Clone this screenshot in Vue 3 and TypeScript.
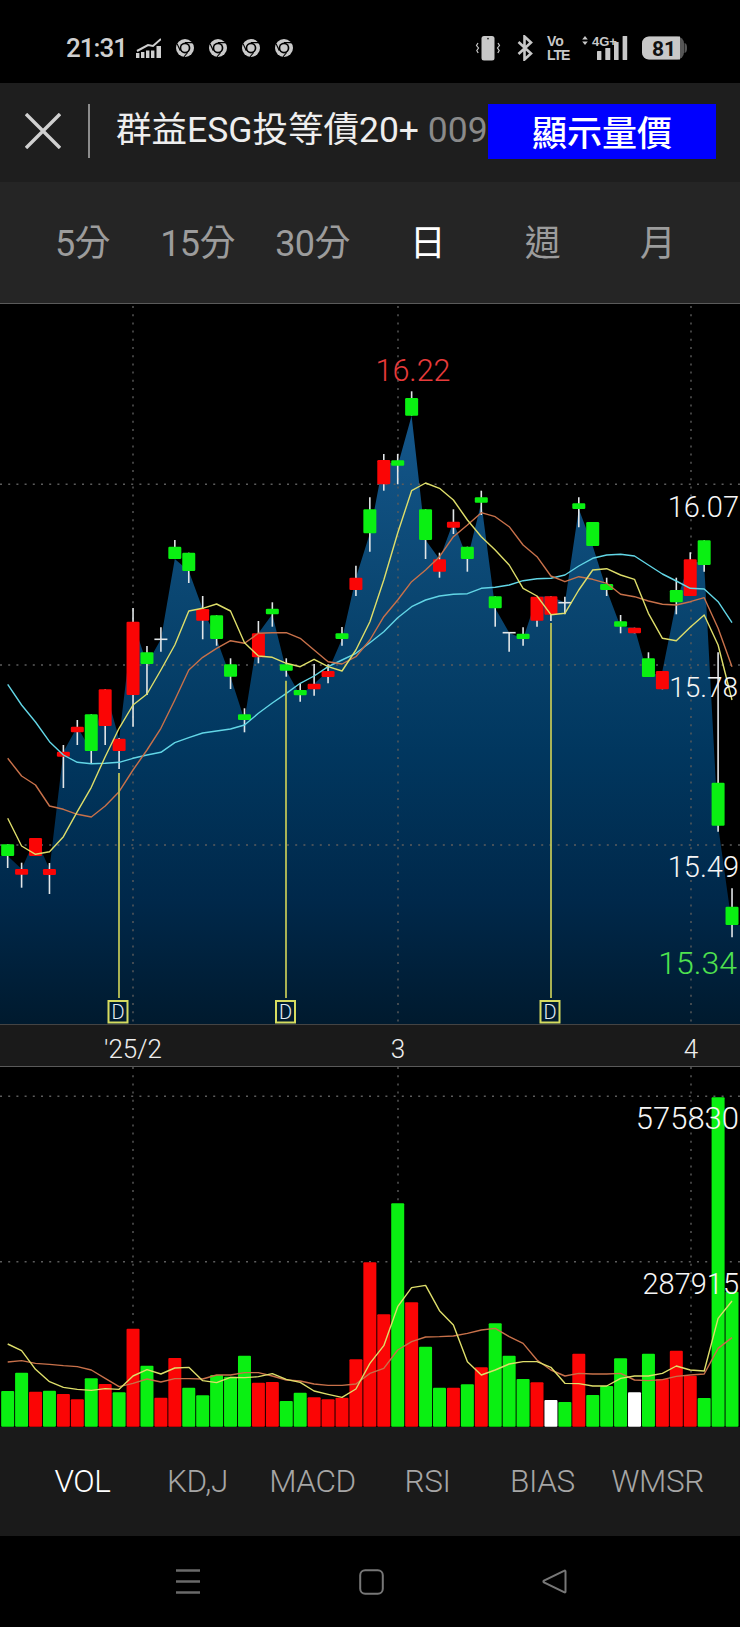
<script setup lang="ts">
import { computed } from 'vue'

type Kind = 'g' | 'r' | 'd'
type Candle = [number, number, number, number, Kind]

const X = (i: number): number => 7.67 + 13.93 * i

const candles: Candle[] = [
  [844.3, 868, 844.3, 856, 'g'], [862.7, 887.7, 869, 874.7, 'r'], [838, 856, 838, 856, 'r'], [863, 894, 869, 875, 'r'],
  [745, 788, 751.7, 756.7, 'r'], [720, 745, 726.7, 732.3, 'r'], [714.3, 764, 714.3, 751, 'g'], [689.3, 745, 689.3, 726, 'r'],
  [738, 769, 738.7, 751, 'r'], [608, 726.7, 621.7, 695, 'r'], [646, 695, 652.3, 664, 'g'], [627.3, 651.7, 639.3, 639.3, 'd'],
  [540, 559, 546.7, 559, 'g'], [552.7, 583, 552.7, 571, 'g'], [596, 639.3, 609, 620.7, 'r'], [615.3, 645.7, 615.3, 639, 'g'],
  [658.3, 689, 664.3, 676.7, 'g'], [708.3, 732.3, 714.3, 720, 'g'], [621, 663.3, 633.3, 657.3, 'r'], [602.3, 626.7, 608.7, 614.3, 'g'],
  [658.3, 676.7, 664.3, 670.7, 'g'], [683.3, 701.7, 690, 695.3, 'g'], [664, 695.7, 683.7, 689.3, 'r'], [664.3, 683.3, 671, 677, 'r'],
  [627, 645.7, 633.3, 639, 'g'], [565.7, 596, 577.7, 590, 'r'], [497.3, 551.7, 509.3, 533.3, 'g'], [454, 490.7, 460, 484.3, 'r'],
  [454, 484.3, 460.3, 465.7, 'g'], [391.3, 415.7, 398, 415.7, 'g'], [509.3, 559, 509.3, 540, 'g'], [552.7, 577.7, 559.3, 571.7, 'r'],
  [509.3, 534, 521.7, 527.7, 'r'], [546.7, 571.7, 546.7, 559, 'g'], [490.7, 515, 497.3, 502.7, 'g'], [596.3, 626.7, 596.3, 608.3, 'g'],
  [632.7, 651.7, 632.7, 632.7, 'd'], [627.3, 645.7, 633.7, 639, 'g'], [596.7, 626.7, 596.7, 620.7, 'r'], [596.3, 621, 596.3, 614.7, 'r'],
  [596.7, 614.3, 602.7, 602.7, 'd'], [497.3, 527.3, 503.3, 509, 'g'], [522, 546, 522, 546, 'g'], [577.7, 596, 584, 590, 'g'],
  [615, 633.3, 621.3, 626.7, 'g'], [627.7, 633.3, 627.7, 633.3, 'r'], [652.3, 677, 658.3, 677, 'g'], [671, 689.3, 671, 689.3, 'r'],
  [577.7, 614.3, 590, 602.3, 'g'], [552.3, 596, 559.3, 596, 'r'], [540.3, 571.7, 540.3, 565, 'g'], [652.3, 831.7, 782.7, 825.7, 'g'],
  [888.3, 937.3, 906.7, 925, 'g'],
]

const line = (ys: number[]): string => ys.map((y, i) => `${X(i).toFixed(1)},${y}`).join(' ')

const ma5 = [818.3, 846, 854.3, 851.7, 836.7, 811.7, 787.3, 756.7, 728.3, 705, 694, 670, 645, 611, 608.3, 604, 611, 642.7, 656, 657.3, 663.3, 666.7, 659.3, 666.7, 671, 650, 621.7, 580, 533, 490.7, 483, 488.3, 500, 520, 536.7, 550, 565, 588.3, 596, 614.7, 613.3, 590, 570, 568.7, 575, 579.3, 613.3, 638.3, 640.7, 627.3, 615, 645, 700]
const ma10 = [758.3, 776, 785, 806, 809.3, 814.3, 817, 806, 791.7, 770, 750, 728.3, 700, 670, 657.3, 648.3, 640.7, 643.3, 633.3, 632.7, 632.7, 638.3, 650, 661.7, 664, 656.7, 640, 616.7, 600, 581.7, 570, 556.7, 536.7, 525, 512.7, 516.7, 526.7, 545, 556.7, 576, 581.7, 576.7, 579.3, 583.3, 594.3, 596.7, 601, 604.3, 605, 601.7, 597.7, 628.3, 666.7]
const ma20 = [684.3, 705, 722, 741.7, 755, 762.3, 763.7, 763.3, 762.3, 758.3, 755, 752.3, 742.7, 737.7, 733, 731, 729, 725, 713.3, 703, 693.3, 683.3, 676, 666.7, 660, 653.3, 642.7, 631.7, 617.7, 606.7, 600, 596, 594.3, 593.7, 588.3, 587.3, 585, 580.7, 578.7, 578.3, 575, 566, 558.3, 555, 554.3, 556, 565, 574, 581, 588.3, 589, 601.7, 622.7]

const closes = computed<number[]>(() =>
  candles.map((c) => (c[4] === 'g' ? c[3] : c[2])),
)
const areaPoints = computed<string>(
  () => `0,1024 0,856 ${line(closes.value)} 740,925 740,1024`,
)

const bodies = computed(() =>
  candles.map((c, i) => ({
    i,
    x: X(i),
    wickTop: c[0],
    wickBot: c[1],
    top: c[2],
    h: c[3] - c[2],
    kind: c[4],
  })),
)

const priceLabels = [
  { t: '16.22', x: 413, y: 381, cls: 'red l305', anchor: 'middle' },
  { t: '16.07', x: 739, y: 516.7, cls: 'white', anchor: 'end' },
  { t: '15.78', x: 738, y: 696.7, cls: 'white l28', anchor: 'end' },
  { t: '15.49', x: 739, y: 876.7, cls: 'white', anchor: 'end' },
  { t: '15.34', x: 737, y: 974, cls: 'green l32', anchor: 'end' },
]

const dividends = [
  { line: 119, top: 773, box: 108.5 },
  { line: 286, top: 680.7, box: 276 },
  { line: 551, top: 623, box: 540.5 },
]

const axisLabels = [
  { t: "'25/2", x: 133 },
  { t: '3', x: 398 },
  { t: '4', x: 691 },
]

const volTops = [933, 878, 935, 932, 942, 958, 895, 912, 937, 746, 857, 953, 834, 923, 946, 885, 890, 827, 908, 906, 963, 938, 952, 958, 953, 838, 547, 703, 370, 667, 800, 923, 923, 913, 862, 730, 827, 897, 907, 960, 966, 821, 945, 918, 835, 937, 821, 897, 812, 887, 954, 52, 635]
const volColorList = 'g g r g r r g r g r g r r g g g g g r r g g r r r r r r g r g g r g r g g g r w g r g g g w g r r r g g g'.split(' ')
const Vy = (z: number): number => 1080 + z / 3

const volBars = computed(() =>
  volTops.map((z, i) => ({
    i,
    x: X(i) - 6.5,
    y: Vy(z),
    h: 1426.7 - Vy(z),
    c: volColorList[i],
  })),
)

const vma5 = [792, 812, 868, 905, 922, 928, 931, 926, 928, 888, 869, 882, 864, 862, 902, 908, 892, 893, 890, 881, 898, 907, 933, 943, 952, 927, 850, 797, 680, 623, 616, 692, 735, 845, 885, 870, 852, 845, 845, 862, 910, 911, 918, 918, 895, 888, 888, 880, 858, 870, 873, 715, 663]
const vma10 = [846, 842, 850, 853, 857, 860, 870, 895, 920, 910, 897, 906, 896, 896, 897, 885, 885, 878, 878, 888, 900, 903, 912, 916, 916, 912, 880, 865, 810, 785, 771, 770, 768, 760, 750, 745, 770, 790, 840, 870, 888, 880, 882, 882, 880, 900, 902, 899, 889, 885, 882, 805, 773]
const vLine5 = line(vma5.map(Vy))
const vLine10 = line(vma10.map(Vy))

const gridX = [133, 398, 691]
const periods = ['5分', '15分', '30分', '日', '週', '月']
const indicators = ['VOL', 'KD,J', 'MACD', 'RSI', 'BIAS', 'WMSR']
const activePeriod = 3
const activeIndicator = 0
</script>

<template>
  <div class="phone">
    <div class="status">
      <span class="time">21:31</span>
      <svg width="25" height="20" viewBox="0 0 25 20">
        <path d="M1 13 12 7 17 8 25 1" fill="none" stroke="#cfcfcf" stroke-width="2" />
        <path d="M0 15h3.4v5H0zM5 14h3.4v6H5zM10 12.5h3.4V20H10zM15 12.5h3.4V20H15zM20.5 8H25v12h-4.500z" fill="#cfcfcf" />
      </svg>
      <svg v-for="n in 4" :key="n" width="18" height="18" viewBox="0 0 18 18">
        <circle cx="9" cy="9" r="9" fill="#cacaca" />
        <circle cx="9" cy="9" r="5.4" fill="#000" />
        <circle cx="9" cy="9" r="3.7" fill="#cacaca" />
        <path d="M9 3.600H17M4.300 11.700 1.200 5M11.700 13.500 8 17.800" stroke="#000" stroke-width="1.100" fill="none" />
      </svg>
      <div class="status-right">
        <svg width="26" height="26" viewBox="0 0 26 26">
          <rect x="6.500" y="1" width="13" height="24.500" rx="2.500" fill="#c8c8c8" />
          <circle cx="13" cy="3.600" r="0.900" fill="#222" />
          <path d="M3 8 1.500 10.500 3.500 13 1.800 15.500 3.200 18M23 8l1.500 2.500-2 2.500 1.700 2.500-1.400 2.500" fill="none" stroke="#c8c8c8" stroke-width="1.200" />
        </svg>
        <svg class="bt" width="16" height="26" viewBox="0 0 16 26">
          <path d="M1.500 7 14 18.500 7.500 24.500V1.500L14 7.500 1.500 19" fill="none" stroke="#c8c8c8" stroke-width="2.600" />
        </svg>
        <div class="volte"><span>Vo</span><span class="lte">LTE</span></div>
        <svg width="46" height="26" viewBox="0 0 46 26">
          <path d="M3 1 5.800 4.500H.2zM3 10 .2 6.500h5.600z" fill="#c8c8c8" />
          <text x="10" y="11" class="net">4G+</text>
          <rect x="15" y="16" width="4.400" height="9" rx="0.500" fill="#c8c8c8" />
          <rect x="23.300" y="13" width="5" height="12" rx="0.500" fill="#c8c8c8" />
          <rect x="32" y="7" width="4.600" height="18" rx="0.500" fill="#c8c8c8" />
          <rect x="40.600" y="1" width="4.600" height="24" rx="0.500" fill="#c8c8c8" />
        </svg>
        <svg width="45" height="24" viewBox="0 0 45 24">
          <rect x="0" y="0.500" width="42" height="23" rx="7" fill="#565656" />
          <path d="M7 .5h31v23H7a7 7 0 0 1-7-7v-9a7 7 0 0 1 7-7z" fill="#c8c8c8" />
          <path d="M42.500 7c1.600.4 2.500 1.500 2.500 5s-.9 4.600-2.500 5z" fill="#565656" />
          <text x="22" y="20" class="batt">81</text>
        </svg>
      </div>
    </div>

    <header class="titlebar">
      <svg class="close" width="36" height="36" viewBox="0 0 36 36">
        <path d="M1 1 35 35M35 1 1 35" stroke="#d0d0d0" stroke-width="3.400" fill="none" />
      </svg>
      <span class="divider"></span>
      <div class="title">群益ESG投等債20+<span class="code"> 009</span></div>
      <button class="toggle">顯示量價</button>
    </header>

    <nav class="periods">
      <span v-for="(p, i) in periods" :key="p" :class="{ on: i === activePeriod }">{{ p }}</span>
    </nav>

    <svg class="price" width="740" height="720" viewBox="0 304 740 720">
      <defs>
        <linearGradient id="areaFill" gradientUnits="userSpaceOnUse" x1="0" y1="416" x2="0" y2="1024">
          <stop offset="0" stop-color="#14568a" />
          <stop offset="0.3" stop-color="#0a4671" />
          <stop offset="0.55" stop-color="#01375f" />
          <stop offset="0.8" stop-color="#00284a" />
          <stop offset="1" stop-color="#001a2e" />
        </linearGradient>
      </defs>
      <polygon :points="areaPoints" fill="url(#areaFill)" />
      <line v-for="y in [484.3, 665, 845]" :key="y" x1="0" x2="740" :y1="y" :y2="y" class="grid" />
      <line v-for="x in gridX" :key="x" :x1="x" :x2="x" y1="306" y2="1024" class="grid" />

      <g v-for="c in bodies" :key="c.i">
        <line :x1="c.x" :x2="c.x" :y1="c.wickTop" :y2="c.wickBot" class="wick" />
        <line v-if="c.kind === 'd'" :x1="c.x - 6.5" :x2="c.x + 6.5" :y1="c.top" :y2="c.top" class="wick" />
        <rect v-else :x="c.x - 6.5" :y="c.top" width="13" :height="c.h" rx="1.2" :class="c.kind" />
      </g>

      <polyline :points="line(ma20)" class="ma cyan" />
      <polyline :points="line(ma10)" class="ma orange" />
      <polyline :points="line(ma5)" class="ma yellow" />

      <g v-for="d in dividends" :key="d.line">
        <line :x1="d.line" :x2="d.line" :y1="d.top" y2="998" class="div-line" />
        <rect :x="d.box" y="1001" width="19" height="21.5" class="div-box" />
        <text :x="d.box + 9.5" y="1019" class="div-text">D</text>
      </g>

      <text
        v-for="l in priceLabels"
        :key="l.t"
        :x="l.x"
        :y="l.y"
        :text-anchor="l.anchor"
        :class="['val', l.cls]"
      >{{ l.t }}</text>
    </svg>

    <svg class="axis" width="740" height="43" viewBox="0 1024 740 43">
      <line x1="0" x2="740" y1="1024.500" y2="1024.500" class="axis-top" />
      <line x1="0" x2="740" y1="1066.500" y2="1066.500" class="axis-bottom" />
      <text v-for="a in axisLabels" :key="a.t" :x="a.x" y="1058" class="axis-text">{{ a.t }}</text>
    </svg>

    <svg class="volume" width="740" height="360" viewBox="0 1067 740 360">
      <line v-for="y in [1096.3, 1261.7]" :key="y" x1="0" x2="740" :y1="y" :y2="y" class="grid" />
      <line v-for="x in gridX" :key="x" :x1="x" :x2="x" y1="1067" y2="1427" class="grid" />
      <rect
        v-for="b in volBars"
        :key="b.i"
        :x="b.x"
        :y="b.y"
        width="13"
        :height="b.h"
        rx="1"
        :class="b.c"
      />
      <polyline :points="vLine10" class="ma orange" />
      <polyline :points="vLine5" class="ma yellow" />
      <text x="739" y="1129" text-anchor="end" class="val white l31">575830</text>
      <text x="739" y="1294" text-anchor="end" class="val white">287915</text>
    </svg>

    <nav class="indicators">
      <span v-for="(p, i) in indicators" :key="p" :class="{ on: i === activeIndicator }">{{ p }}</span>
    </nav>

    <div class="navbar">
      <svg width="26" height="25" viewBox="0 0 26 25">
        <path d="M1 1.500H25M1 12.500H25M1 23.500H25" stroke="#6a6a6a" stroke-width="2.400" fill="none" />
      </svg>
      <svg width="25" height="26" viewBox="0 0 25 26">
        <rect x="1.200" y="1.200" width="22.600" height="23.600" rx="5" stroke="#777" stroke-width="2" fill="none" />
      </svg>
      <svg width="25" height="25" viewBox="0 0 25 25">
        <path d="M23.500 2.500V22.500Q23.500 24 22 23L2 13.500Q.8 12.500 2 11.500L22 1.800Q23.500 1 23.500 2.500Z" stroke="#777" stroke-width="2" fill="none" />
      </svg>
    </div>
  </div>
</template>

<style scoped>
.phone {
  width: 740px;
  height: 1627px;
  background: #000;
  font-family: Roboto, "Noto Sans CJK TC", sans-serif;
  overflow: hidden;
}
.status {
  height: 83px;
  display: flex;
  align-items: center;
  padding: 13px 53px 0 66px;
  box-sizing: border-box;
  gap: 15px;
}
.time {
  color: #cfcfcf;
  font-size: 26px;
  font-weight: 500;
  letter-spacing: -1px;
  width: 55px;
}
.status-right {
  margin-left: auto;
  display: flex;
  align-items: center;
  gap: 14px;
}
.bt {
  margin-left: 2px;
}
.volte {
  display: flex;
  flex-direction: column;
  gap: 2px;
  color: #c8c8c8;
  font-weight: 700;
  line-height: 12px;
  font-size: 14px;
  width: 21px;
  white-space: nowrap;
  font-family: "Liberation Sans", sans-serif;
}
.lte {
  letter-spacing: -1px;
}
.net {
  font-size: 13px;
  font-weight: 700;
  fill: #c8c8c8;
  font-family: "Liberation Sans", sans-serif;
}
.batt {
  font-size: 21px;
  font-weight: 700;
  fill: #111;
  text-anchor: middle;
}
.titlebar {
  height: 99px;
  background: #1e1e1e;
  display: flex;
  align-items: center;
  box-sizing: border-box;
  padding: 0 24px 3px 25px;
}
.close {
  flex: none;
}
.divider {
  flex: none;
  width: 2px;
  height: 54px;
  background: #8c8c8c;
  margin: 0 26px 0 27px;
}
.title {
  flex: 1;
  min-width: 0;
  color: #eee;
  font-size: 35.5px;
  line-height: 44px;
  white-space: nowrap;
  overflow: hidden;
  font-weight: 400;
  padding-bottom: 2px;
}
.code {
  color: #8a8a8a;
}
.toggle {
  flex: none;
  width: 228px;
  height: 55px;
  background: #0000ff;
  color: #fff;
  border: 0;
  padding: 0 0 2px;
  font-family: inherit;
  font-size: 35px;
  font-weight: 500;
}
.periods,
.indicators {
  display: grid;
  grid-template-columns: repeat(6, 115px);
  padding: 0 25px;
  align-items: center;
  justify-items: center;
  box-sizing: border-box;
}
.periods {
  height: 122px;
  padding-bottom: 6px;
  background: #252525;
  border-bottom: 1px solid #5a5a5a;
  color: #9c9c9c;
  font-size: 36px;
  font-weight: 400;
  letter-spacing: -0.6px;
}
.periods .on,
.indicators .on {
  color: #fff;
}
.indicators {
  height: 109px;
  background: #1a1a1a;
  color: #a6a6a6;
  font-size: 31.5px;
  font-weight: 300;
  letter-spacing: -0.4px;
}
svg {
  display: block;
}
.grid {
  stroke: #5c5c5c;
  stroke-width: 1.4;
  stroke-dasharray: 2 6.2;
}
.wick {
  stroke: #e2e6e8;
  stroke-width: 1.6;
}
.g {
  fill: #0af012;
}
.r {
  fill: #fb0505;
}
.w {
  fill: #fff;
}
.ma {
  fill: none;
  stroke-width: 1.4;
  stroke-linejoin: round;
}
.yellow {
  stroke: #dede6a;
}
.orange {
  stroke: #c8714a;
}
.cyan {
  stroke: #62d6e6;
}
.div-line {
  stroke: #bcc257;
  stroke-width: 1.8;
}
.div-box {
  fill: none;
  stroke: #d6dc60;
  stroke-width: 2;
}
.div-text {
  font-size: 20px;
  fill: #e4eef4;
  text-anchor: middle;
  font-weight: 300;
}
.val {
  font-size: 29px;
  font-weight: 300;
}
.val.l28 {
  font-size: 28px;
}
.val.l305 {
  font-size: 30.5px;
}
.val.l31 {
  font-size: 31px;
}
.val.l32 {
  font-size: 32px;
}
.val.white {
  fill: #f6f6f6;
}
.val.red {
  fill: #e83b3b;
}
.val.green {
  fill: #4fe24f;
}
.axis {
  background: #1a1a1a;
}
.axis-top {
  stroke: #444;
}
.axis-bottom {
  stroke: #5a5a5a;
}
.axis-text {
  font-size: 26px;
  font-weight: 300;
  fill: #eee;
  text-anchor: middle;
}
.navbar {
  height: 91px;
  display: grid;
  grid-template-columns: 26px 25px 25px;
  column-gap: 158px;
  padding: 33px 0 0 175px;
  box-sizing: border-box;
}
</style>
